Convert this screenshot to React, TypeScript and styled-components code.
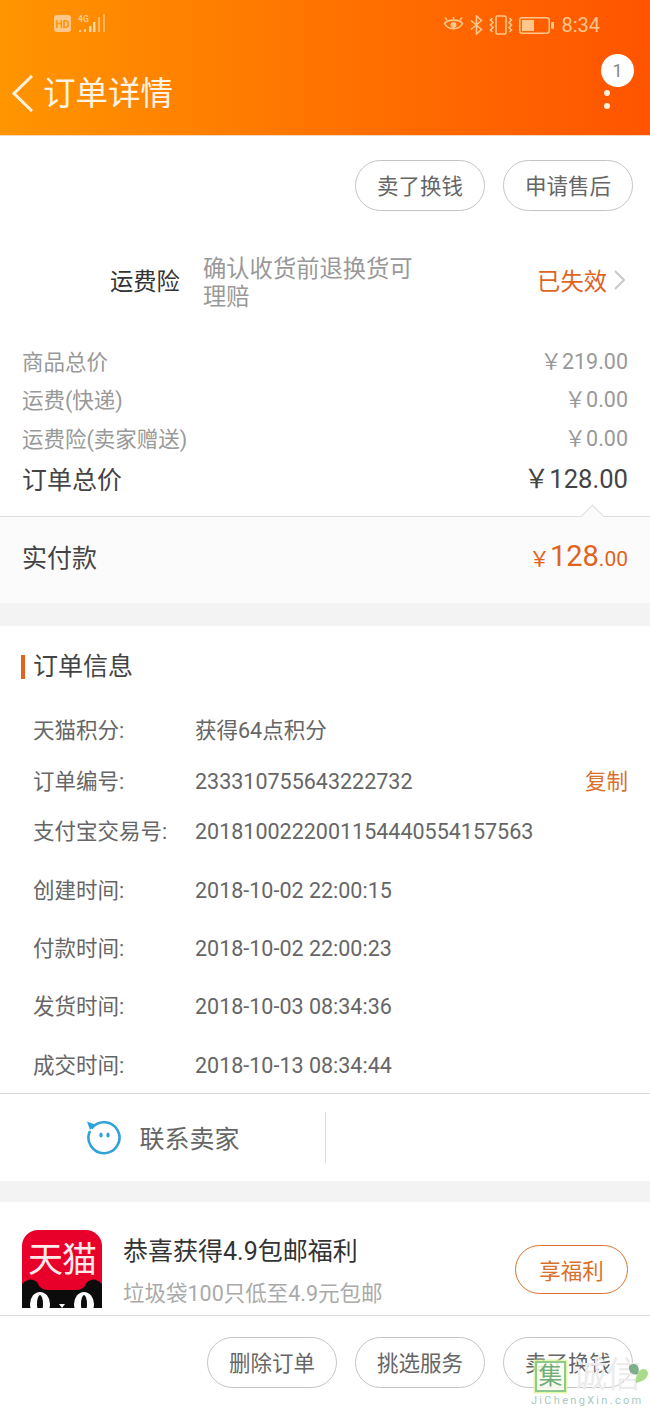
import React from 'react';
import styled, { createGlobalStyle } from 'styled-components';

const GlobalStyle = createGlobalStyle`
    html, body {
        margin: 0;
        padding: 0;
        background: #fff;
        overflow: hidden;
    }
    body {
        font-family: Roboto, "Noto Sans CJK SC", sans-serif;
    }
`;

const Page = styled.div`
    position: relative;
    width: 650px;
    height: 1408px;
    overflow: hidden;
    background: #fff;
`;

const Header = styled.header`
    height: 136px;
    background: linear-gradient(90deg, #ff9500 0%, #ff7300 50%, #ff5400 100%);
    border-bottom: 1px solid #f0d9c0;
    box-sizing: border-box;
    display: flex;
    flex-direction: column;
`;

const StatusBar = styled.div`
    height: 50px;
    padding: 0 50px 0 54px;
    display: flex;
    align-items: center;
    justify-content: space-between;
    color: #ffc78c;
`;

const StatusGroup = styled.div`
    display: flex;
    align-items: center;
    gap: 6px;
`;

const StatusTime = styled.span`
    font-size: 20px;
    margin-left: 1px;
`;

const TitleBar = styled.div`
    position: relative;
    flex: 1;
    display: flex;
    align-items: center;
    padding: 1px 0 0 12px;
    color: #fff4e4;
`;

const Title = styled.h1`
    margin: 2px 0 0 10px;
    font-size: 32.5px;
    font-weight: 400;
    line-height: 40px;
`;

const MoreButton = styled.div`
    position: absolute;
    right: 40px;
    top: 40px;
    display: flex;
    flex-direction: column;
    gap: 7px;
`;

const Dot = styled.span`
    width: 6px;
    height: 6px;
    border-radius: 50%;
    background: #fff0dc;
`;

const Badge = styled.span`
    position: absolute;
    right: 16px;
    top: 4px;
    width: 33px;
    height: 33px;
    border-radius: 50%;
    background: #fff;
    color: #888;
    font-size: 18px;
    display: flex;
    align-items: center;
    justify-content: center;
`;

const ButtonRow = styled.div<{ $top: number }>`
    display: flex;
    justify-content: flex-end;
    gap: 18px;
    padding: ${({ $top }) => `${$top}px 17px 0 0`};
`;

const PillButton = styled.div`
    width: 130px;
    height: 51px;
    box-sizing: border-box;
    border: 1px solid #c4c4c4;
    border-radius: 26px;
    padding-bottom: 2px;
    background: transparent;
    color: #666;
    font-size: 21.5px;
    display: flex;
    align-items: center;
    justify-content: center;
`;

const InsuranceRow = styled.div`
    display: flex;
    align-items: center;
    height: 56px;
    margin-top: 41px;
    padding: 0 24px 0 110px;
`;

const InsuranceLabel = styled.span`
    width: 93px;
    flex-shrink: 0;
    font-size: 23.3px;
    color: #333;
`;

const InsuranceText = styled.span`
    width: 216px;
    padding-top: 5px;
    font-size: 23.3px;
    line-height: 28px;
    color: #999;
`;

const InsuranceStatus = styled.span`
    margin-left: auto;
    display: flex;
    align-items: center;
    gap: 6px;
    font-size: 23.3px;
    color: #e0641e;
`;

const PriceList = styled.div`
    padding: 33px 22px 0;
    height: 208px;
    box-sizing: border-box;
`;

const PriceRow = styled.div`
    height: 38.6px;
    display: flex;
    align-items: center;
    justify-content: space-between;
    font-size: 21.5px;
    color: #999;
`;

const PriceValue = styled.span`
    margin-top: -2px;
`;

const PriceTotalRow = styled.div`
    height: 42px;
    display: flex;
    align-items: center;
    justify-content: space-between;
    font-size: 25px;
    color: #444;
`;

const PriceTotalAmount = styled.span`
    font-size: 25.6px;
    margin-top: -2px;
`;

const PaidRow = styled.div`
    position: relative;
    height: 87px;
    box-sizing: border-box;
    border-top: 1px solid #dedede;
    background: #fbfbfb;
    padding: 0 22px 9px;
    display: flex;
    align-items: center;
    justify-content: space-between;
    font-size: 25px;
    color: #444;
    &::before {
        content: '';
        position: absolute;
        right: 49px;
        top: -9px;
        width: 16px;
        height: 16px;
        background: #fbfbfb;
        border-top: 1px solid #dedede;
        border-left: 1px solid #dedede;
        transform: rotate(45deg);
    }
`;

const PaidAmount = styled.span`
    color: #e0641e;
    font-size: 21px;
    display: flex;
    align-items: baseline;
`;

const PaidWhole = styled.span`
    font-size: 29px;
`;

const Gap = styled.div<{ $height: number }>`
    height: ${({ $height }) => $height}px;
    background: #f3f3f3;
`;

const SectionTitle = styled.h2`
    margin: 29px 0 0 21px;
    padding-left: 8px;
    height: 24px;
    line-height: 24px;
    border-left: 4px solid #e0641e;
    font-size: 25px;
    font-weight: 400;
    color: #444;
`;

const InfoList = styled.div`
    padding: 7px 22px 0 33px;
    height: 414px;
    box-sizing: border-box;
`;

const InfoRow = styled.div<{ $gap: number }>`
    height: 30px;
    margin-top: ${({ $gap }) => $gap}px;
    display: flex;
    align-items: baseline;
    font-size: 21.5px;
    line-height: 30px;
    color: #666;
`;

const InfoLabel = styled.span`
    width: 162px;
    flex-shrink: 0;
`;

const CopyLink = styled.span`
    margin-left: auto;
    color: #d9712c;
`;

const ContactBar = styled.div`
    height: 88px;
    box-sizing: border-box;
    border-top: 1px solid #d8d8d8;
    display: flex;
    align-items: center;
`;

const ContactButton = styled.div`
    width: 326px;
    height: 51px;
    box-sizing: border-box;
    border-right: 1px solid #dcdcdc;
    display: flex;
    align-items: center;
    justify-content: center;
    gap: 18px;
    font-size: 25px;
    color: #666;
`;

const ContactLabel = styled.span`
    margin-top: -2px;
`;

const Promo = styled.div`
    height: 113px;
    overflow: hidden;
    box-sizing: border-box;
    padding: 28px 22px 0;
    display: flex;
    align-items: flex-start;
`;

const PromoText = styled.div`
    margin-left: 21px;
    padding-top: 1px;
    flex: 1;
`;

const PromoTitle = styled.div`
    font-size: 25px;
    line-height: 42px;
    color: #333;
`;

const PromoSub = styled.div`
    font-size: 21.5px;
    line-height: 41px;
    color: #aaa;
`;

const PromoButton = styled.div`
    width: 113px;
    height: 49px;
    margin-top: 15px;
    box-sizing: border-box;
    border: 1.5px solid #d9712c;
    border-radius: 25px;
    color: #d9712c;
    font-size: 21.5px;
    display: flex;
    align-items: center;
    justify-content: center;
`;

const BottomBar = styled.div`
    border-top: 1px solid #dedede;
`;

const Watermark = styled.div`
    position: absolute;
    left: 531px;
    bottom: 0;
    width: 119px;
    display: flex;
    flex-direction: column;
    pointer-events: none;
`;

const WatermarkMain = styled.div`
    display: flex;
    align-items: center;
    padding-left: 4px;
    white-space: nowrap;
`;

const WatermarkBox = styled.span`
    width: 31px;
    height: 31px;
    flex-shrink: 0;
    box-sizing: border-box;
    border: 2px solid #8fc98f;
    background: rgba(248, 252, 235, 0.85);
    box-shadow: 0 0 0 1.5px rgba(220, 245, 150, 0.8);
    color: #6fae7a;
    font-size: 24px;
    line-height: 26px;
    text-align: center;
`;

const WatermarkText = styled.span`
    font-size: 35px;
    line-height: 36px;
    margin-left: 6px;
    color: #ececec;
    letter-spacing: -1px;
`;

const WatermarkLeaf = styled.svg`
    position: absolute;
    left: 96px;
    top: 4px;
`;

const WatermarkUrl = styled.span`
    font-size: 11px;
    line-height: 14px;
    letter-spacing: 2.3px;
    color: #a8c9bd;
    white-space: nowrap;
`;

const BackChevron = () => (
    <svg width="21" height="37" viewBox="0 0 21 37" fill="none">
        <polyline points="20,1 2,18.5 20,36" stroke="#fff0dc" strokeWidth="3" />
    </svg>
);

const RightChevron = () => (
    <svg width="13" height="22" viewBox="0 0 13 22" fill="none">
        <polyline points="2,2 11,11 2,20" stroke="#c8c8c8" strokeWidth="2" />
    </svg>
);

const HdIcon = () => (
    <svg width="54" height="22" viewBox="0 0 54 22">
        <rect x="0" y="1" width="17" height="17" rx="3" fill="#ffc78c" />
        <text x="8.5" y="14" fontSize="10.5" fontWeight="700" textAnchor="middle" fill="#ff9600" fontFamily="Roboto">HD</text>
        <text x="24" y="8" fontSize="8.5" fontWeight="700" fill="#ffc78c" fontFamily="Roboto">4G</text>
        <rect x="25" y="16" width="2" height="2" fill="#ffc78c" />
        <rect x="30" y="15" width="2" height="3" fill="#ffc78c" />
        <rect x="35" y="12" width="2.4" height="6" fill="#ffd9ae" />
        <rect x="39" y="8" width="2.4" height="10" fill="#ffd9ae" />
        <rect x="44" y="3" width="2" height="15" fill="#ffc78c" opacity="0.7" />
        <rect x="49" y="0" width="2" height="18" fill="#ffc78c" opacity="0.7" />
    </svg>
);

const EyeIcon = () => (
    <svg width="21" height="18" viewBox="0 0 21 18" fill="none" stroke="#ffc78c" strokeWidth="1.6">
        <path d="M1.5 7.5 C5 3 16 3 19.5 7.5 C16 14.5 5 14.5 1.5 7.5 Z" />
        <circle cx="10.5" cy="9" r="3" fill="#ffc78c" stroke="none" />
        <path d="M4 4 L2 1.5 M17 4 L19 1.5 M10.5 3 V1" />
    </svg>
);

const BluetoothIcon = () => (
    <svg width="13" height="20" viewBox="0 0 13 20" fill="none" stroke="#ffc78c" strokeWidth="1.6">
        <path d="M1 5.5 L11.5 14.5 L6.5 19 V1 L11.5 5.5 L1 14.5" />
    </svg>
);

const VibrateIcon = () => (
    <svg width="24" height="20" viewBox="0 0 24 20" fill="none" stroke="#ffc78c" strokeWidth="1.6">
        <rect x="7" y="1" width="10" height="18" rx="1.5" />
        <path d="M3.5 3 L1.5 5 L4 7.5 L1.5 10 L4 12.5 L1.5 15 L3.5 17" />
        <path d="M20.5 3 L22.5 5 L20 7.5 L22.5 10 L20 12.5 L22.5 15 L20.5 17" />
    </svg>
);

const BatteryIcon = () => (
    <svg width="35" height="17" viewBox="0 0 35 17" fill="none">
        <rect x="0.75" y="0.75" width="29.5" height="15.5" rx="2.5" stroke="#ffc78c" strokeWidth="1.5" />
        <rect x="3" y="3" width="12" height="11" fill="#ffc78c" />
        <rect x="32" y="5" width="3" height="7" rx="1" fill="#ffc78c" />
    </svg>
);

const SmileIcon = () => (
    <svg width="36" height="36" viewBox="0 0 36 36" fill="none">
        <path d="M6.5 8.5 A15.5 15.5 0 1 1 5 11" stroke="#2ea3d8" strokeWidth="2.6" />
        <path d="M2 1.5 L10 4.5 L5 10 Z" fill="#2ea3d8" />
        <ellipse cx="16" cy="15" rx="1.7" ry="2.6" fill="#2ea3d8" />
        <ellipse cx="23" cy="15" rx="1.7" ry="2.6" fill="#2ea3d8" />
    </svg>
);

const TmallIcon = () => (
    <svg width="80" height="78" viewBox="0 0 80 78" style={{ flexShrink: 0 }}>
        <defs>
            <clipPath id="tmall-clip">
                <path d="M16 0 H64 A16 16 0 0 1 80 16 V78 H0 V16 A16 16 0 0 1 16 0 Z" />
            </clipPath>
        </defs>
        <g clipPath="url(#tmall-clip)">
            <rect width="80" height="78" fill="#e8002b" />
            <text x="40" y="42" fontSize="35" textAnchor="middle" fill="#ffe9ea" fontFamily="Noto Sans CJK SC" letterSpacing="-1">天猫</text>
            <path d="M0 54 Q8 46 15 52 Q18 60 26 60 H54 Q62 60 65 52 Q72 46 80 54 V78 H0 Z" fill="#0c0c0c" />
            <ellipse cx="18" cy="74" rx="10" ry="12" fill="#fff" />
            <ellipse cx="62" cy="74" rx="10" ry="12" fill="#fff" />
            <ellipse cx="18" cy="74" rx="3" ry="9" fill="#0c0c0c" />
            <ellipse cx="62" cy="74" rx="3" ry="9" fill="#0c0c0c" />
            <path d="M37 74 H43 L40 78 Z" fill="#fff" />
        </g>
    </svg>
);

const App: React.FC = () => {
    const infoRows: { label: string; value: string; gap: number; copy?: boolean }[] = [
        { label: '天猫积分:', value: '获得64点积分', gap: 30 },
        { label: '订单编号:', value: '233310755643222732', gap: 21, copy: true },
        { label: '支付宝交易号:', value: '2018100222001154440554157563', gap: 20 },
        { label: '创建时间:', value: '2018-10-02 22:00:15', gap: 29 },
        { label: '付款时间:', value: '2018-10-02 22:00:23', gap: 28 },
        { label: '发货时间:', value: '2018-10-03 08:34:36', gap: 28 },
        { label: '成交时间:', value: '2018-10-13 08:34:44', gap: 29 },
    ];

    return (
        <Page>
            <GlobalStyle />
            <Header>
                <StatusBar>
                    <HdIcon />
                    <StatusGroup>
                        <EyeIcon />
                        <BluetoothIcon />
                        <VibrateIcon />
                        <BatteryIcon />
                        <StatusTime>8:34</StatusTime>
                    </StatusGroup>
                </StatusBar>
                <TitleBar>
                    <BackChevron />
                    <Title>订单详情</Title>
                    <MoreButton>
                        <Dot />
                        <Dot />
                    </MoreButton>
                    <Badge>1</Badge>
                </TitleBar>
            </Header>

            <ButtonRow $top={24}>
                <PillButton>卖了换钱</PillButton>
                <PillButton>申请售后</PillButton>
            </ButtonRow>

            <InsuranceRow>
                <InsuranceLabel>运费险</InsuranceLabel>
                <InsuranceText>确认收货前退换货可理赔</InsuranceText>
                <InsuranceStatus>
                    已失效
                    <RightChevron />
                </InsuranceStatus>
            </InsuranceRow>

            <PriceList>
                <PriceRow><span>商品总价</span><PriceValue>￥219.00</PriceValue></PriceRow>
                <PriceRow><span>运费(快递)</span><PriceValue>￥0.00</PriceValue></PriceRow>
                <PriceRow><span>运费险(卖家赠送)</span><PriceValue>￥0.00</PriceValue></PriceRow>
                <PriceTotalRow><span>订单总价</span><PriceTotalAmount>￥128.00</PriceTotalAmount></PriceTotalRow>
            </PriceList>

            <PaidRow>
                <span>实付款</span>
                <PaidAmount>￥<PaidWhole>128</PaidWhole>.00</PaidAmount>
            </PaidRow>

            <Gap $height={23} />

            <SectionTitle>订单信息</SectionTitle>
            <InfoList>
                {infoRows.map((row) => (
                    <InfoRow key={row.label} $gap={row.gap}>
                        <InfoLabel>{row.label}</InfoLabel>
                        <span>{row.value}</span>
                        {row.copy && <CopyLink>复制</CopyLink>}
                    </InfoRow>
                ))}
            </InfoList>

            <ContactBar>
                <ContactButton>
                    <SmileIcon />
                    <ContactLabel>联系卖家</ContactLabel>
                </ContactButton>
            </ContactBar>

            <Gap $height={21} />

            <Promo>
                <TmallIcon />
                <PromoText>
                    <PromoTitle>恭喜获得4.9包邮福利</PromoTitle>
                    <PromoSub>垃圾袋100只低至4.9元包邮</PromoSub>
                </PromoText>
                <PromoButton>享福利</PromoButton>
            </Promo>

            <BottomBar>
                <ButtonRow $top={21}>
                    <PillButton>删除订单</PillButton>
                    <PillButton>挑选服务</PillButton>
                    <PillButton>卖了换钱</PillButton>
                </ButtonRow>
            </BottomBar>

            <Watermark>
                <WatermarkMain>
                    <WatermarkBox>集</WatermarkBox>
                    <WatermarkText>诚信</WatermarkText>
                </WatermarkMain>
                <WatermarkLeaf width="22" height="24" viewBox="0 0 22 24">
                    <path d="M2 4 C8 -1 14 4 11 12 C6 14 1 10 2 4 Z" fill="#7fae8a" />
                    <path d="M11 12 C12 6 20 5 21 11 C21 17 14 20 9 21 C8 17 9 14 11 12 Z" fill="#a8dc8a" />
                </WatermarkLeaf>
                <WatermarkUrl>JiChengXin.com</WatermarkUrl>
            </Watermark>
        </Page>
    );
};

export default App;
